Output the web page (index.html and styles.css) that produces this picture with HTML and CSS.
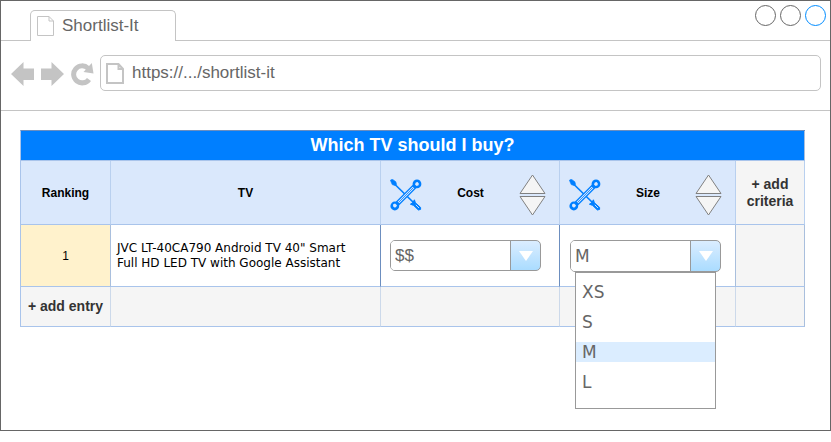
FILE: index.html
```html
<!DOCTYPE html>
<html lang="en">
<head>
<meta charset="utf-8">
<title>Shortlist-It</title>
<link rel="stylesheet" href="styles.css">
</head>
<body>
<svg class="defs" aria-hidden="true">
  <symbol id="tools" viewBox="0 0 32 32">
    <path d="M4 4.500 25 25" stroke="currentColor" stroke-width="1.700" fill="none"/>
    <path d="M.4 1.200 2.300.2 5.800 2.700 6.600 5.400 5 6.600 2.200 5.600Z" fill="currentColor" stroke="currentColor" stroke-width=".6"/>
    <path d="M6.500 25.500 25.500 6.500" stroke="currentColor" stroke-width="5" fill="none"/>
    <circle cx="4.800" cy="27" r="4.400" fill="currentColor"/>
    <circle cx="27" cy="4.900" r="4.400" fill="currentColor"/>
    <path d="M8.500 23.500 23.500 8.500" stroke="#dae8fc" stroke-width="2.400" fill="none"/>
    <path d="M8.500 23.500 23.500 8.500" stroke="currentColor" stroke-width=".8" fill="none"/>
    <path d="M3 25.600 5 24.600 7 26.300 6 28.300 4.400 28.600 3.200 27.400Z" fill="#dae8fc"/>
    <path d="M25 5.400 25.800 3.400 27.600 3 28.800 4.400 28.600 6.300 26.600 7Z" fill="#dae8fc"/>
    <path d="M24.400 20.800 25.400 23.800 30.600 28.400 30.600 30.400 28.400 31 23.600 26.400 20.400 25.200 22.800 23.600Z" fill="currentColor" stroke="currentColor"/>
    <path d="M25.800 25.800 29 29" stroke="#dae8fc" stroke-width=".9" fill="none"/>
  </symbol>
</svg>
<div class="window">
  <header>
    <div class="tab-strip">
      <div class="tab">
        <svg class="tab-page" viewBox="0 0 17 20" aria-hidden="true"><path d="M.5.5H12L16.500 5V19.500H.5ZM12 .5V5H16.500"/></svg>
        <span>Shortlist-It</span>
      </div>
      <div class="window-controls">
        <button class="circle" aria-label="Minimize"></button>
        <button class="circle" aria-label="Maximize"></button>
        <button class="circle circle-active" aria-label="Close"></button>
      </div>
    </div>
    <div class="toolbar">
      <nav class="nav">
        <button aria-label="Back"><svg viewBox="0 0 24 26"><path d="M0 13 12.500 1V7.500H23V19H12.500V25Z"/></svg></button>
        <button aria-label="Forward"><svg viewBox="0 0 24 26"><path d="M23 13 10.500 1V7.500H0V19H10.500V25Z"/></svg></button>
        <button aria-label="Reload"><svg viewBox="0 0 24 26"><path d="M18 18.400A8.500 8.500 0 1 1 17 7.200" fill="none" stroke="currentColor" stroke-width="5"/><path d="M20.800 2 22.500 12.500 12.500 11Z"/></svg></button>
      </nav>
      <label class="address">
        <svg class="address-page" viewBox="0 0 18 21" aria-hidden="true"><path d="M1 1H12.500L17 6V20H1ZM12.500 1V6H17"/></svg>
        <input type="text" value="https://.../shortlist-it" aria-label="Address">
      </label>
    </div>
  </header>
  <main>
    <table class="shortlist">
      <colgroup>
        <col class="col-rank"><col><col class="col-cost"><col class="col-size"><col class="col-add">
      </colgroup>
      <thead>
        <tr class="title-row"><th colspan="5">Which TV should I buy?</th></tr>
        <tr class="head-row">
          <th>Ranking</th>
          <th>TV</th>
          <th>
            <div class="criterion">
              <button class="settings" aria-label="Edit Cost"><svg><use href="#tools"/></svg></button>
              <span>Cost</span>
              <div class="sorter">
                <button aria-label="Cost up"><svg viewBox="0 0 27 20"><path d="M13.500 1 26 19.500H1Z"/></svg></button>
                <button aria-label="Cost down"><svg viewBox="0 0 27 20"><path d="M13.500 19 26 .5H1Z"/></svg></button>
              </div>
            </div>
          </th>
          <th>
            <div class="criterion">
              <button class="settings" aria-label="Edit Size"><svg><use href="#tools"/></svg></button>
              <span>Size</span>
              <div class="sorter">
                <button aria-label="Size up"><svg viewBox="0 0 27 20"><path d="M13.500 1 26 19.500H1Z"/></svg></button>
                <button aria-label="Size down"><svg viewBox="0 0 27 20"><path d="M13.500 19 26 .5H1Z"/></svg></button>
              </div>
            </div>
          </th>
          <th class="muted"><button class="add">+ add criteria</button></th>
        </tr>
      </thead>
      <tbody>
        <tr class="entry-row">
          <td class="rank">1</td>
          <td class="name">JVC LT-40CA790 Android TV 40" Smart Full HD LED TV with Google Assistant</td>
          <td class="choice">
            <div class="combo">
              <select aria-label="Cost"><option>$</option><option selected>$$</option><option>$$$</option></select>
            </div>
          </td>
          <td class="choice">
            <div class="combo combo-open">
              <select aria-label="Size"><option>XS</option><option>S</option><option selected>M</option><option>L</option></select>
              <ul class="menu" role="listbox" aria-label="Size options">
                <li role="option">XS</li>
                <li role="option">S</li>
                <li role="option" aria-selected="true">M</li>
                <li role="option">L</li>
              </ul>
            </div>
          </td>
          <td class="muted"></td>
        </tr>
        <tr class="add-row">
          <td><button class="add">+ add entry</button></td>
          <td></td><td></td><td></td><td></td>
        </tr>
      </tbody>
    </table>
  </main>
</div>
</body>
</html>
```
FILE: styles.css
```css
* { box-sizing: border-box; }

body {
  margin: 0;
  background: #fff;
  font-family: "Liberation Sans", Arial, sans-serif;
}

button {
  padding: 0;
  border: 0;
  background: none;
  color: inherit;
  font: inherit;
}

svg { display: block; }

.defs { position: absolute; width: 0; height: 0; }

.window {
  min-height: calc(100vh - 11px);
  border: 1px solid #666;
}

/* Browser chrome */
.tab-strip {
  display: flex;
  justify-content: space-between;
  height: 40px;
  padding: 0 4px 0 29px;
  border-bottom: 1px solid #c4c4c4;
}

.tab {
  display: flex;
  align-items: center;
  gap: 8px;
  width: 146px;
  height: 31px;
  margin-top: 9px;
  padding: 0 6px;
  border: 1px solid #c4c4c4;
  border-bottom: 0;
  border-radius: 5px 5px 0 0;
  background: #fff;
  color: #666;
  font-size: 17px;
}

.tab-page { width: 17px; height: 20px; fill: none; stroke: #c4c4c4; }

.window-controls { display: flex; gap: 4px; padding-top: 4px; }

.circle {
  width: 21px;
  height: 21px;
  border: 1px solid #666;
  border-radius: 50%;
}

.circle-active { border-color: #008cff; }

.toolbar {
  display: flex;
  align-items: flex-start;
  gap: 5px;
  height: 70px;
  padding: 14px 9px 0 10px;
  border-bottom: 1px solid #c4c4c4;
}

.nav { display: flex; gap: 6px; padding-top: 6px; color: #c4c4c4; }
.nav svg { width: 24px; height: 26px; fill: currentColor; }

.address {
  display: flex;
  flex: 1;
  align-items: center;
  gap: 8px;
  height: 36px;
  padding: 0 5px;
  border: 1px solid #c4c4c4;
  border-radius: 5px;
}

.address-page { width: 18px; height: 21px; fill: none; stroke: #c4c4c4; stroke-width: 2; }

.address input {
  flex: 1;
  padding: 0;
  border: 0;
  outline: 0;
  background: none;
  color: #666;
  font: 17px "Liberation Sans", Arial, sans-serif;
}

/* Shortlist table */
main { padding: 19px 25px 19px 19px; }

.shortlist {
  width: 100%;
  table-layout: fixed;
  border-spacing: 0;
  border-top: 1px solid #6c8ebf;
  border-left: 1px solid #a9c4eb;
  font-size: 12px;
}

.col-rank { width: 90px; }
.col-cost { width: 179px; }
.col-size { width: 176px; }
.col-add { width: 69px; }

th, td {
  padding: 0;
  border-right: 1px solid #a9bfdd;
  border-bottom: 1px solid #a9c4eb;
}

.title-row th {
  height: 30px;
  background: #007fff;
  color: #fff;
  font-size: 18px;
}

.head-row th {
  height: 64px;
  background: #dae8fc;
  border-right-color: #b9d0ef;
}

.muted, .head-row .muted, .add-row td { background: #f5f5f5; }

.criterion {
  display: grid;
  grid-template-columns: 32px 1fr 27px;
  align-items: center;
  padding: 0 13px 0 9px;
}

.settings, .sorter { margin-top: 4px; }
.settings { color: #007fff; }
.settings svg { width: 32px; height: 32px; }

.sorter { display: grid; gap: 2px; }
.sorter svg { width: 27px; height: 20px; fill: #f5f5f5; stroke: #808080; }

.add { color: #333; font-size: 14px; font-weight: bold; line-height: 17px; }

.entry-row td { height: 62px; }
.entry-row .rank { background: #fff2cc; text-align: center; }

.entry-row .name {
  padding: 0 20px 0 6px;
  border-right-color: #6c8ebf;
  font-family: "DejaVu Sans", Verdana, sans-serif;
  line-height: 15px;
}

.choice { padding: 0 9px; }
.choice:last-of-type, .choice + .choice { padding-left: 10px; }
.entry-row .choice:nth-child(3) { border-right-color: #6c8ebf; }

.combo {
  position: relative;
  width: 151px;
  height: 31px;
  border: 1px solid #999;
  border-radius: 5px;
  background: linear-gradient(#dbedff, #aadcff) right / 29px 100% no-repeat;
}

.combo-open { height: 32px; }

.combo::after {
  content: "";
  position: absolute;
  top: 10px;
  right: 7px;
  border: solid transparent;
  border-width: 10px 7px 0;
  border-top-color: #fff;
  pointer-events: none;
}

.combo select {
  width: 120px;
  height: 100%;
  padding: 0 4px;
  border: 0;
  border-right: 1px solid #999;
  border-radius: 4px 0 0 4px;
  outline: 0;
  appearance: none;
  background: #fff;
  color: #666;
  font: 17px "Liberation Sans", Arial, sans-serif;
}

.combo-open select, .menu { font-family: "DejaVu Sans", Verdana, sans-serif; }

.menu {
  position: absolute;
  top: 31px;
  left: 4px;
  z-index: 1;
  display: grid;
  gap: 10px;
  width: 141px;
  margin: 0;
  padding: 9px 0 16px;
  border: 1px solid #999;
  background: #fff;
  color: #666;
  font-size: 17px;
  line-height: 20px;
  list-style: none;
}

.menu li { padding: 0 6px; }
.menu [aria-selected="true"] { background: #dbedff; }

.add-row td { height: 40px; border-right-color: #ccd9ea; text-align: center; }
.add-row td:last-child { border-right-color: #a9bfdd; }
```
